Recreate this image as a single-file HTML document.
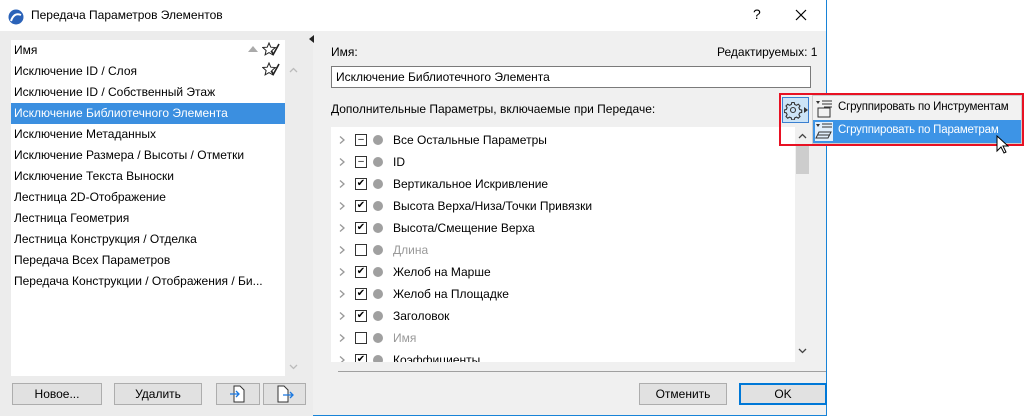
<!DOCTYPE html>
<html><head><meta charset="utf-8"><style>
*{margin:0;padding:0;box-sizing:border-box}
body{width:1024px;height:417px;background:#fff;font-family:"Segoe UI","Liberation Sans",sans-serif;font-size:12px;color:#000;position:relative;overflow:hidden}
.a{position:absolute}
.win{left:0;top:0;width:827px;height:416px;border-right:1px solid #1883d7;border-bottom:1px solid #1883d7;background:#f0f0f0}
.title{left:0;top:0;width:826px;height:31px;background:#fff}
.row{position:absolute;left:0;width:274px;height:21px;line-height:21px;padding-left:3px;white-space:nowrap}
.sel{background:#3b8fe0;color:#fff}
.btn{position:absolute;height:22px;border:1px solid #adadad;background:#e1e1e1;text-align:center;line-height:20px}
.r{position:absolute;left:0;height:22px;width:460px;line-height:22px;white-space:nowrap}
.r .ch{position:absolute;left:8px;top:7px;width:6px;height:8px}
.r .cb{position:absolute;left:24px;top:5px;width:12px;height:12px;border:1px solid #333;background:#fff;font-size:10px;line-height:10px;text-align:center}
.r .dot{position:absolute;left:42px;top:6px;width:10px;height:10px;border-radius:50%;background:#a0a0a0}
.r .t{position:absolute;left:62px}
.g{color:#999}
</style></head><body>
<svg width="0" height="0" style="position:absolute"><defs><symbol id="chv" viewBox="0 0 6 8"><path d="M1 0.5L5 4L1 7.5" stroke="#999" stroke-width="1.3" fill="none"/></symbol></defs></svg>
<div class="a win"></div>
<div class="a title"></div>
<svg class="a" style="left:8px;top:9px" width="16" height="16" viewBox="0 0 16 16"><circle cx="8" cy="8" r="7.5" fill="#2a62b8"/><path d="M3 12 Q6 3 13 6" stroke="#fff" stroke-width="2" fill="none"/></svg>
<div class="a" style="left:31px;top:8px;font-size:12px">Передача Параметров Элементов</div>
<div class="a" style="left:753px;top:6px;font-size:14px">?</div>
<svg class="a" style="left:795px;top:9px" width="12" height="12"><path d="M1 1L11 11M11 1L1 11" stroke="#000" stroke-width="1.2"/></svg>
<div class="a" style="left:0;top:31px;width:313px;height:385px;background:#ececec"></div>
<div class="a" style="left:309px;top:35px;width:0;height:0;border-top:4px solid transparent;border-bottom:4px solid transparent;border-right:5px solid #222"></div>
<div class="a" style="left:11px;top:40px;width:274px;height:336px;background:#fff">
<div class="row" style="top:0">Имя</div>
<div class="row" style="top:21px">Исключение ID / Слоя</div>
<div class="row" style="top:42px">Исключение ID / Собственный Этаж</div>
<div class="row sel" style="top:63px">Исключение Библиотечного Элемента</div>
<div class="row" style="top:84px">Исключение Метаданных</div>
<div class="row" style="top:105px">Исключение Размера / Высоты / Отметки</div>
<div class="row" style="top:126px">Исключение Текста Выноски</div>
<div class="row" style="top:147px">Лестница 2D-Отображение</div>
<div class="row" style="top:168px">Лестница Геометрия</div>
<div class="row" style="top:189px">Лестница Конструкция / Отделка</div>
<div class="row" style="top:210px">Передача Всех Параметров</div>
<div class="row" style="top:231px">Передача Конструкции / Отображения / Би...</div>
</div>
<div class="a" style="left:248px;top:46px;width:0;height:0;border-left:5px solid transparent;border-right:5px solid transparent;border-bottom:6px solid #aaa"></div>
<svg class="a" style="left:262px;top:42px" width="18" height="16"><path d="M7 1l1.8 4.2 4.5.3-3.4 3 1 4.4L7 10.6 3.1 12.9l1-4.4-3.4-3 4.5-.3z" fill="none" stroke="#222"/><path d="M9 9l2.5 3L17 2" stroke="#222" stroke-width="1.6" fill="none"/></svg>
<svg class="a" style="left:262px;top:62px" width="18" height="16"><path d="M7 1l1.8 4.2 4.5.3-3.4 3 1 4.4L7 10.6 3.1 12.9l1-4.4-3.4-3 4.5-.3z" fill="none" stroke="#222"/><path d="M9 9l2.5 3L17 2" stroke="#222" stroke-width="1.6" fill="none"/></svg>
<svg class="a" style="left:289px;top:67px" width="9" height="6"><path d="M1 5L4.5 1.5L8 5" stroke="#bbb" stroke-width="1.3" fill="none"/></svg>
<svg class="a" style="left:289px;top:364px" width="9" height="6"><path d="M1 1L4.5 4.5L8 1" stroke="#bbb" stroke-width="1.3" fill="none"/></svg>
<div class="btn" style="left:12px;top:383px;width:90px">Новое...</div>
<div class="btn" style="left:114px;top:383px;width:88px">Удалить</div>
<div class="btn" style="left:216px;top:383px;width:44px"><svg width="16" height="18" style="margin-top:1px"><path d="M4 1h6l4 4v12H4z" fill="#fff" stroke="#333"/><path d="M0 9h9M6 6l3 3-3 3" stroke="#1b78e0" stroke-width="1.3" fill="none"/></svg></div>
<div class="btn" style="left:263px;top:383px;width:43px"><svg width="18" height="18" style="margin-top:1px"><path d="M2 1h6l4 4v12H2z" fill="#fff" stroke="#333"/><path d="M7 10h10M14 7l3 3-3 3" stroke="#1b78e0" stroke-width="1.3" fill="none"/></svg></div>
<div class="a" style="left:331px;top:45px">Имя:</div>
<div class="a" style="left:717px;top:45px">Редактируемых: 1</div>
<div class="a" style="left:331px;top:66px;width:480px;height:22px;background:#fff;border:1px solid #7a7a7a;padding-left:4px;line-height:20px">Исключение Библиотечного Элемента</div>
<div class="a" style="left:331px;top:102px">Дополнительные Параметры, включаемые при Передаче:</div>
<div class="a" style="left:331px;top:127px;width:464px;height:235px;background:#fff;overflow:hidden">
<div class="r" style="top:2px"><svg class="ch"><use href="#chv"/></svg><span class="cb">–</span><span class="dot"></span><span class="t">Все Остальные Параметры</span></div>
<div class="r" style="top:24px"><svg class="ch"><use href="#chv"/></svg><span class="cb">–</span><span class="dot"></span><span class="t">ID</span></div>
<div class="r" style="top:46px"><svg class="ch"><use href="#chv"/></svg><span class="cb">✔</span><span class="dot"></span><span class="t">Вертикальное Искривление</span></div>
<div class="r" style="top:68px"><svg class="ch"><use href="#chv"/></svg><span class="cb">✔</span><span class="dot"></span><span class="t">Высота Верха/Низа/Точки Привязки</span></div>
<div class="r" style="top:90px"><svg class="ch"><use href="#chv"/></svg><span class="cb">✔</span><span class="dot"></span><span class="t">Высота/Смещение Верха</span></div>
<div class="r" style="top:112px"><svg class="ch"><use href="#chv"/></svg><span class="cb"></span><span class="dot"></span><span class="t g">Длина</span></div>
<div class="r" style="top:134px"><svg class="ch"><use href="#chv"/></svg><span class="cb">✔</span><span class="dot"></span><span class="t">Желоб на Марше</span></div>
<div class="r" style="top:156px"><svg class="ch"><use href="#chv"/></svg><span class="cb">✔</span><span class="dot"></span><span class="t">Желоб на Площадке</span></div>
<div class="r" style="top:178px"><svg class="ch"><use href="#chv"/></svg><span class="cb">✔</span><span class="dot"></span><span class="t">Заголовок</span></div>
<div class="r" style="top:200px"><svg class="ch"><use href="#chv"/></svg><span class="cb"></span><span class="dot"></span><span class="t g">Имя</span></div>
<div class="r" style="top:222px"><svg class="ch"><use href="#chv"/></svg><span class="cb">✔</span><span class="dot"></span><span class="t">Коэффициенты</span></div>
</div>
<div class="a" style="left:796px;top:144px;width:13px;height:30px;background:#cdcdcd"></div>
<svg class="a" style="left:798px;top:133px" width="9" height="6"><path d="M1 5L4.5 1.5L8 5" stroke="#444" stroke-width="1.3" fill="none"/></svg>
<svg class="a" style="left:798px;top:348px" width="9" height="6"><path d="M1 1L4.5 4.5L8 1" stroke="#444" stroke-width="1.3" fill="none"/></svg>
<div class="a" style="left:338px;top:371px;width:488px;height:1px;background:#a0a0a0"></div>
<div class="btn" style="left:639px;top:383px;width:88px">Отменить</div>
<div class="btn" style="left:739px;top:383px;width:88px;border:2px solid #0078d7;line-height:18px">OK</div>
<div class="a" style="left:779px;top:93px;width:245px;height:53px;border:2px solid #e81123"></div>
<div class="a" style="left:782px;top:97px;width:27px;height:26px;background:#cce4f7;border:1px solid #3a7fd0"></div>
<svg class="a" style="left:784px;top:100px" width="25" height="20" viewBox="0 0 25 20"><g transform="translate(9,10)" fill="none" stroke="#333" stroke-width="1.1"><path d="M-1.2-7.5h2.4l.5 2 1.8.8 1.8-1.1 1.7 1.7-1.1 1.8.8 1.8 2 .5v2.4l-2 .5-.8 1.8 1.1 1.8-1.7 1.7-1.8-1.1-1.8.8-.5 2h-2.4l-.5-2-1.8-.8-1.8 1.1-1.7-1.7 1.1-1.8-.8-1.8-2-.5v-2.4l2-.5.8-1.8-1.1-1.8 1.7-1.7 1.8 1.1 1.8-.8z"/><circle r="2.5"/></g><path d="M20 7l4 3-4 3z" fill="#333"/></svg>
<div class="a" style="left:812px;top:95px;width:210px;height:49px;background:#f2f2f2;border:1px solid #ccc"></div>
<div class="a" style="left:813px;top:120px;width:208px;height:23px;background:#3d94e6"></div>
<svg class="a" style="left:815px;top:99px" width="18" height="19"><path d="M1 2h4l-2 3z" fill="#333"/><path d="M7 2h10M7 5h10M9 8h8" stroke="#333"/><path d="M3 9h12v9H3z" fill="none" stroke="#333"/></svg>
<svg class="a" style="left:815px;top:122px" width="18" height="19"><rect width="18" height="19" fill="#fff" opacity=".85"/><path d="M1 2h4l-2 3z" fill="#333"/><path d="M7 2h10M7 5h10" stroke="#333"/><path d="M4 10h12l-3 6H1z" fill="none" stroke="#333"/><path d="M3 13h11" stroke="#333"/></svg>
<div class="a" style="left:838px;top:101px;font-size:11.5px;letter-spacing:-0.2px">Сгруппировать по Инструментам</div>
<div class="a" style="left:838px;top:124px;color:#fff;font-size:11.5px;letter-spacing:-0.2px">Сгруппировать по Параметрам</div>
<svg class="a" style="left:996px;top:135px" width="14" height="20"><path d="M1 1v15l4-4 3 6 2-1-3-6h5z" fill="#fff" stroke="#000"/></svg>
</body></html>
